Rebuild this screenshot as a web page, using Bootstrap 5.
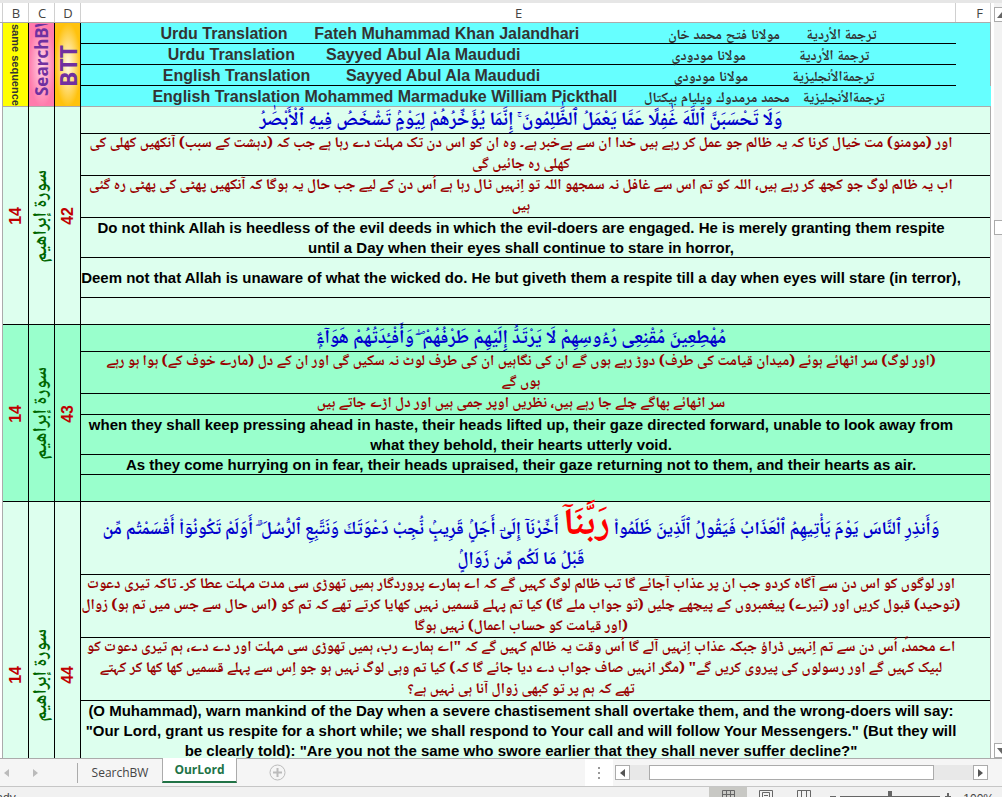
<!DOCTYPE html>
<html lang="en">
<head>
<meta charset="utf-8">
<meta name="viewport" content="width=device-width, initial-scale=1">
<title>OurLord</title>
<link href="https://cdn.jsdelivr.net/npm/bootstrap@5.3.0/dist/css/bootstrap.min.css" rel="stylesheet">
<script src="https://cdn.jsdelivr.net/npm/bootstrap@5.3.0/dist/js/bootstrap.bundle.min.js"></script>
<style>
  :root { --line: #ababab; --latin: "Liberation Sans", "Noto Naskh Arabic", "DejaVu Sans", sans-serif; --naskh: "Noto Naskh Arabic", "DejaVu Sans", serif; --ui: "Open Sans", sans-serif; }
  body { font-family: var(--latin); background: #f5f5f5; border-top: 3px solid #e6e6e6; }
  .pane { min-height: 0; }

  /* worksheet */
  .sheet { table-layout: fixed; border-collapse: separate; border-spacing: 0; color: #000; font-weight: 700; font-size: 15px; line-height: 20px; white-space: nowrap; }
  .sheet th, .sheet td { padding: 0; text-align: center; vertical-align: middle; box-shadow: inset 0 -1px #000; }
  .sheet .gut { background: #fff; box-shadow: inset -1px 0 var(--line); }
  .sheet thead th { height: 20px; font: 400 13px/18px var(--ui); color: #444; background: #fff; box-shadow: inset 0 -1px var(--line), inset -1px 0 #d0d0d0; }
  .sheet .edge { box-shadow: inset -1px 0 var(--line), inset 0 -1px #000; }
  .sheet td.edge[colspan] { padding-right: 30px; }
  .sheet .side { box-shadow: inset -1px -1px #000; color: #c00000; font-size: 16px; overflow: hidden; }
  .pale { background: #ddffee; }
  .mint { background: #99ffcc; }
  .titles td { height: 21px; background: #66ffff; color: #333; font-size: 16px; white-space: pre; }
  .titles bdo, .titles b { font-size: 14px; }
  .titles td.edge { box-shadow: inset -1px 0 var(--line); }
  .titles:last-child td { box-shadow: inset 0 -1px var(--line); }
  .sheet td.label { box-shadow: inset -1px 0 #000, inset 0 -1px var(--line); }
  .h20 { height: 20px; } .h21 { height: 21px; } .h27 { height: 27px; } .h40 { height: 40px; }
  .h42 { height: 42px; } .h60 { height: 60px; } .h63 { height: 63px; } .h73 { height: 73px; }
  .ayah { color: #0000cc; font: 700 19px/26px var(--naskh); }
  .sheet .ayah.tall { font-size: 18px; line-height: 30px; padding-top: 8px; }
  .ayah em { color: #f00; font-size: 38px; line-height: 30px; font-style: normal; }
  .urdu { color: #990000; font: 700 15px/21px var(--naskh); }
  .turn { writing-mode: vertical-rl; transform: rotate(180deg); }
  .down { writing-mode: vertical-rl; }
  .sura { color: #006600; font: 700 19px/24px var(--naskh); }
  .sheet td.same { background: #ff0; color: #333; font: 700 11px/24px var(--latin); }
  .sheet td.search { background: radial-gradient(closest-side, #ffd6e6, #ff7bac); color: #7030a0; font: 700 17px/24px var(--ui); }
  .sheet td.btt { background: radial-gradient(closest-side, #fffbe8, #ffdf80 50%, #ffc20e); color: #7030a0; font: 700 23px/24px var(--ui); }
  .label div { height: 83px; margin: auto; overflow: hidden; }
  .search div { padding-top: 11px; }

  /* scroll bars */
  .vbar { width: 11px; border-left: 3px solid #fff; background: #f2f2f2; }
  .vbar button, .vbar i, .hbar button, .hbar i { background: #fff; border: 1px solid var(--line); padding: 0; display: flex; align-items: center; justify-content: center; flex: none; overflow: hidden; }
  .vbar button, .vbar i { width: 15px; height: 15px; }
  .hbar { width: 373px; margin: 0 14px 0 2px; background: #e8e8e8; height: 15px; }
  .hbar button { width: 15px; }
  .hbar i { width: 285px; }

  /* tab strip and status bar */
  .tabs { height: 29px; border-bottom: 1px solid #c6c6c6; font: 400 12px/20px var(--ui); flex: none; }
  .tabs .rule { border-top: 1px solid var(--line); }
  .tabs .plain { border: 0; background: none; padding: 0; color: #444; line-height: 0; }
  .tabs .arrow { width: 29px; text-align: left; }
  .arrows { width: 77px; }
  .tabs .stab { width: 85px; border: 0; border-left: 1px solid var(--line); padding: 0; background: none; color: #444; height: 20px; }
  .tabs .stab.current { width: 75px; height: 25px; border-right: 1px solid var(--line); border-bottom: 2px solid #217346; background: #fff; color: #217346; font-weight: 700; }
  .grip { width: 28px; background: #fff; }
  .status { height: 10px; background: #f1f1f1; font: 400 12px/16px "Liberation Sans", sans-serif; color: #444; overflow: hidden; flex: none; }
  .status button { border: 0; background: none; padding: 3px 0 0; width: 38px; line-height: 0; }
  .status button.on { background: #c8c8c4; }
  .ready { margin-left: -19px; padding-top: 3px; }
</style>
</head>
<body class="vh-100 d-flex flex-column overflow-hidden">
<main class="pane d-flex flex-fill overflow-hidden bg-white">
  <div class="flex-fill overflow-hidden">
  <table class="sheet w-100">
    <colgroup><col style="width:3px"><col style="width:26px"><col style="width:26px"><col style="width:26px"><col><col style="width:35px"></colgroup>
    <thead><tr><th></th><th>B</th><th>C</th><th>D</th><th>E</th><th class="text-end pe-2">F</th></tr></thead>
    <tbody>
      <tr class="titles"><td class="gut" rowspan="4"></td>
        <td class="side label same" rowspan="4"><div class="down">same sequence</div></td>
        <td class="side label search" rowspan="4"><div class="turn">SearchBW</div></td>
        <td class="side label btt" rowspan="4"><div class="turn">BTT</div></td>
        <td>Urdu Translation      Fateh Muhammad Khan Jalandhari                    <b>ترجمة الأردية</b>      <b>مولانا فتح محمد خان</b></td><td class="edge"></td></tr>
      <tr class="titles"><td>Urdu Translation       Sayyed Abul Ala Maududi                                  <b>ترجمة الأردية</b>            <b>مولانا مودودي</b></td><td class="edge"></td></tr>
      <tr class="titles"><td>English Translation        Sayyed Abul Ala Maududi                              <b>ترجمةالأنجليزية</b>          <b>مولانا مودودي</b></td><td class="edge"></td></tr>
      <tr class="titles"><td>English Translation Mohammed Marmaduke William Pickthall      <b>ترجمةالأنجليزية</b>   <b>محمد مرمدوك ويليام بيكتال</b></td><td class="edge"></td></tr>
    </tbody>
    <tbody class="pale">
      <tr><td class="gut" rowspan="6"></td><td class="side" rowspan="6"><div class="turn mx-auto">14</div></td><td class="side" rowspan="6"><div class="turn sura mx-auto" dir="rtl" lang="ar">سورة إبراهيم</div></td><td class="side" rowspan="6"><div class="turn mx-auto">42</div></td>
        <td colspan="2" class="edge h27 ayah" dir="rtl" lang="ar">وَلَا تَحْسَبَنَّ ٱللَّهَ غَٰفِلًا عَمَّا يَعْمَلُ ٱلظَّٰلِمُونَ ۚ إِنَّمَا يُؤَخِّرُهُمْ لِيَوْمٍۢ تَشْخَصُ فِيهِ ٱلْأَبْصَٰرُ</td></tr>
      <tr><td colspan="2" class="edge h42 urdu" dir="rtl" lang="ur">اور (مومنو) مت خیال کرنا کہ یہ ظالم جو عمل کر رہے ہیں خدا ان سے بےخبر ہے۔ وہ ان کو اس دن تک مہلت دے رہا ہے جب کہ (دہشت کے سبب) آنکھیں کھلی کی<br>کھلی رہ جائیں گی</td></tr>
      <tr><td colspan="2" class="edge h42 urdu" dir="rtl" lang="ur">اب یہ ظالم لوگ جو کچھ کر رہے ہیں، اللہ کو تم اس سے غافل نہ سمجھو اللہ تو اِنہیں ٹال رہا ہے اُس دن کے لیے جب حال یہ ہوگا کہ آنکھیں پھٹی کی پھٹی رہ گئی<br>ہیں</td></tr>
      <tr><td colspan="2" class="edge h40">Do not think Allah is heedless of the evil deeds in which the evil-doers are engaged. He is merely granting them respite<br>until a Day when their eyes shall continue to stare in horror,</td></tr>
      <tr><td colspan="2" class="edge h40">Deem not that Allah is unaware of what the wicked do. He but giveth them a respite till a day when eyes will stare (in terror),</td></tr>
      <tr><td colspan="2" class="edge h27"></td></tr>
    </tbody>
    <tbody class="mint">
      <tr><td class="gut" rowspan="6"></td><td class="side" rowspan="6"><div class="turn mx-auto">14</div></td><td class="side" rowspan="6"><div class="turn sura mx-auto" dir="rtl" lang="ar">سورة إبراهيم</div></td><td class="side" rowspan="6"><div class="turn mx-auto">43</div></td>
        <td colspan="2" class="edge h27 ayah" dir="rtl" lang="ar">مُهْطِعِينَ مُقْنِعِى رُءُوسِهِمْ لَا يَرْتَدُّ إِلَيْهِمْ طَرْفُهُمْ ۖ وَأَفْـِٔدَتُهُمْ هَوَآءٌۭ</td></tr>
      <tr><td colspan="2" class="edge h42 urdu" dir="rtl" lang="ur">(اور لوگ) سر اٹھائے ہوئے (میدان قیامت کی طرف) دوڑ رہے ہوں گے ان کی نگاہیں ان کی طرف لوٹ نہ سکیں گی اور ان کے دل (مارے خوف کے) ہوا ہو رہے<br>ہوں گے</td></tr>
      <tr><td colspan="2" class="edge h21 urdu" dir="rtl" lang="ur">سر اٹھائے بھاگے چلے جا رہے ہیں، نظریں اوپر جمی ہیں اور دل اڑے جاتے ہیں</td></tr>
      <tr><td colspan="2" class="edge h40">when they shall keep pressing ahead in haste, their heads lifted up, their gaze directed forward, unable to look away from<br>what they behold, their hearts utterly void.</td></tr>
      <tr><td colspan="2" class="edge h20">As they come hurrying on in fear, their heads upraised, their gaze returning not to them, and their hearts as air.</td></tr>
      <tr><td colspan="2" class="edge h27"></td></tr>
    </tbody>
    <tbody class="pale">
      <tr><td class="gut" rowspan="6"></td><td class="side" rowspan="6"><div class="turn mx-auto">14</div></td><td class="side" rowspan="6"><div class="turn sura mx-auto" dir="rtl" lang="ar">سورة إبراهيم</div></td><td class="side" rowspan="6"><div class="turn mx-auto">44</div></td>
        <td colspan="2" class="edge h73 ayah tall" dir="rtl" lang="ar">وَأَنذِرِ ٱلنَّاسَ يَوْمَ يَأْتِيهِمُ ٱلْعَذَابُ فَيَقُولُ ٱلَّذِينَ ظَلَمُوا۟ <em>رَبَّنَآ</em> أَخِّرْنَآ إِلَىٰٓ أَجَلٍۢ قَرِيبٍۢ نُّجِبْ دَعْوَتَكَ وَنَتَّبِعِ ٱلرُّسُلَ ۗ أَوَلَمْ تَكُونُوٓا۟ أَقْسَمْتُم مِّن<br>قَبْلُ مَا لَكُم مِّن زَوَالٍۢ</td></tr>
      <tr><td colspan="2" class="edge h63 urdu" dir="rtl" lang="ur">اور لوگوں کو اس دن سے آگاہ کردو جب ان پر عذاب آجائے گا تب ظالم لوگ کہیں گے کہ اے ہمارے پروردگار ہمیں تھوڑی سی مدت مہلت عطا کر۔ تاکہ تیری دعوت<br>(توحید) قبول کریں اور (تیرے) پیغمبروں کے پیچھے چلیں (تو جواب ملے گا) کیا تم پہلے قسمیں نہیں کھایا کرتے تھے کہ تم کو (اس حال سے جس میں تم ہو) زوال<br>(اور قیامت کو حساب اعمال) نہیں ہوگا</td></tr>
      <tr><td colspan="2" class="edge h63 urdu" dir="rtl" lang="ur">اے محمدؐ، اُس دن سے تم اِنہیں ڈراؤ جبکہ عذاب اِنہیں آلے گا اُس وقت یہ ظالم کہیں گے کہ "اے ہمارے رب، ہمیں تھوڑی سی مہلت اور دے دے، ہم تیری دعوت کو<br>لبیک کہیں گے اور رسولوں کی پیروی کریں گے" (مگر انہیں صاف جواب دے دیا جائے گا کہ) کیا تم وہی لوگ نہیں ہو جو اِس سے پہلے قسمیں کھا کھا کر کہتے<br>تھے کہ ہم پر تو کبھی زوال آنا ہی نہیں ہے؟</td></tr>
      <tr><td colspan="2" class="edge h60">(O Muhammad), warn mankind of the Day when a severe chastisement shall overtake them, and the wrong-doers will say:<br>"Our Lord, grant us respite for a short while; we shall respond to Your call and will follow Your Messengers." (But they will<br>be clearly told): "Are you not the same who swore earlier that they shall never suffer decline?"</td></tr>
      <tr><td colspan="2" class="edge h60"></td></tr>
      <tr><td colspan="2" class="edge h27"></td></tr>
    </tbody>
  </table>
  </div>
  <div class="vbar d-flex flex-column flex-shrink-0 overflow-hidden pt-1">
    <button type="button" aria-label="Scroll up"><svg width="9" height="6"><path d="M0 6 5 0 9 6z" fill="#666"/></svg></button>
    <div style="flex:199"></div><i></i><div style="flex:509"></div>
    <button type="button" aria-label="Scroll down"><svg width="9" height="6"><path d="M0 0 5 6 9 0z" fill="#666"/></svg></button>
  </div>
</main>
<nav class="tabs d-flex">
  <div class="rule arrows d-flex align-items-center ps-1">
    <button class="plain arrow" type="button" aria-label="Previous sheet"><svg width="5" height="8"><path d="M5 0v8L0 4z" fill="#bbb"/></svg></button>
    <button class="plain arrow" type="button" aria-label="Next sheet"><svg width="5" height="8"><path d="M0 0v8l5-4z" fill="#bbb"/></svg></button>
  </div>
  <div class="rule d-flex align-items-center"><button class="stab" type="button">SearchBW</button></div>
  <button class="stab current" type="button">OurLord</button>
  <div class="rule flex-fill d-flex align-items-center ps-4">
    <button class="plain ms-2" type="button" aria-label="New sheet"><svg width="17" height="17" fill="none" stroke="#bbb"><circle cx="8.500" cy="8.500" r="7.500"/><path d="M8.500 4v9M4 8.500h9" stroke-width="2"/></svg></button>
  </div>
  <div class="rule grip d-flex align-items-center justify-content-center"><svg width="2" height="12" fill="#999"><path d="M0 0h2v2H0zM0 5h2v2H0zM0 10h2v2H0z"/></svg></div>
  <div class="rule d-flex align-items-center">
    <div class="hbar d-flex">
      <button type="button" aria-label="Scroll left"><svg width="5" height="8"><path d="M5 0v8L0 4z" fill="#555"/></svg></button>
      <div style="flex:19"></div><i></i><div style="flex:39"></div>
      <button type="button" aria-label="Scroll right"><svg width="5" height="8"><path d="M0 0v8l5-4z" fill="#555"/></svg></button>
    </div>
  </div>
</nav>
<footer class="status d-flex align-items-start">
  <span class="ready">Ready</span>
  <button class="on ms-auto" type="button" aria-label="Normal view"><svg width="13" height="13" fill="none" stroke="#666"><path d="M.5.5h12v12H.5zM4.500 0v13M8.500 0v13M0 4.500h13M0 8.500h13"/></svg></button>
  <button type="button" aria-label="Page layout"><svg width="14" height="13" fill="none" stroke="#666"><path d="M.5.5h13v12H.5zM3.500 2.500h7v10h-7zM5 5.500h4M5 7.500h4"/></svg></button>
  <button type="button" aria-label="Page break preview"><svg width="14" height="13" fill="none" stroke="#666"><path d="M.5.5h13v12H.5zM4.500 0v8M9.500 0v8"/></svg></button>
  <svg class="ms-1" width="124" height="14" fill="#666"><path d="M3 9h6v2H3zM13 9h100v1H13zM61 4h4v12h-4zM118 9h8v2h-8z"/><path d="M120 6h2v8h-2z"/></svg>
  <span class="ps-2 ms-1 me-2 pt-1">100%</span>
</footer>
</body>
</html>
